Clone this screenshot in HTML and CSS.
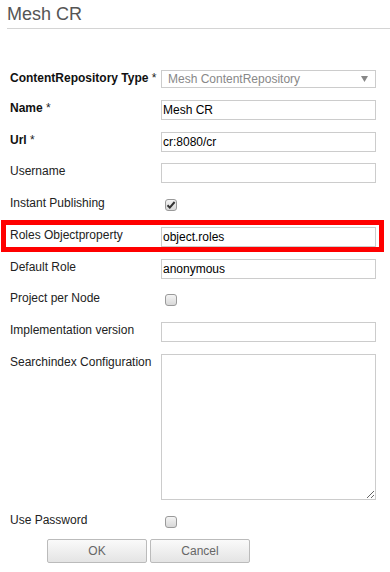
FILE: index.html
```html
<!DOCTYPE html>
<html lang="en">
<head>
    <meta charset="UTF-8">
    <title>Mesh CR</title>
    <link rel="stylesheet" href="styles.css">
</head>
<body>

<div class="header">
    <h1>Mesh CR</h1>
</div>

<form class="cr-form">
    <div class="fields">
        <div class="row">
            <label class="required"><b>ContentRepository Type</b> *</label>
            <div class="select disabled">
                <span>Mesh ContentRepository</span>
                <svg class="arrow" width="7" height="6" viewBox="0 0 7 6"><path d="M0 0h7L3.5 6z" fill="#888"/></svg>
            </div>
        </div>
        <div class="row">
            <label class="required"><b>Name</b> *</label>
            <input type="text" value="Mesh CR">
        </div>
        <div class="row">
            <label class="required"><b>Url</b> *</label>
            <input type="text" value="cr:8080/cr">
        </div>
        <div class="row">
            <label>Username</label>
            <input type="text" value="">
        </div>
        <div class="row">
            <label>Instant Publishing</label>
            <div class="check-cell">
                <span class="check">
                    <svg width="10" height="10" viewBox="0 0 10 10"><path d="M1.5 5.2l2.3 2.4L8.6 2" fill="none" stroke="#333" stroke-width="2"/></svg>
                </span>
            </div>
        </div>
        <div class="row highlight">
            <label>Roles Objectproperty</label>
            <input type="text" value="object.roles">
        </div>
        <div class="row">
            <label>Default Role</label>
            <input type="text" value="anonymous">
        </div>
        <div class="row">
            <label>Project per Node</label>
            <div class="check-cell"><span class="check"></span></div>
        </div>
        <div class="row">
            <label>Implementation version</label>
            <input type="text" value="">
        </div>
        <div class="row">
            <label>Searchindex Configuration</label>
            <textarea></textarea>
        </div>
        <div class="row">
            <label>Use Password</label>
            <div class="check-cell"><span class="check"></span></div>
        </div>
    </div>

    <div class="buttons">
        <button type="button">OK</button>
        <button type="button">Cancel</button>
    </div>
</form>

</body>
</html>
```

FILE: styles.css
```css
* {
    box-sizing: border-box;
}

body {
    margin: 0;
    font-family: 'Liberation Sans', Arial, sans-serif;
    font-size: 12px;
    color: #333;
    background: #fff;
}

.header {
    margin-left: 7px;
    padding: 4px 0 3px 0;
    border-bottom: 1px solid #d4d4d4;
}

h1 {
    margin: 0;
    font-size: 18px;
    font-weight: normal;
    line-height: 21px;
    color: #555;
}

.cr-form {
    padding: 41px 0 0 10px;
}

.fields {
    display: flex;
    flex-direction: column;
    gap: 11.75px;
}

.row {
    width: 366px;
    display: flex;
    align-items: flex-start;
}

.row label {
    width: 151px;
    flex: none;
    line-height: 16px;
    color: #222;
}

.row label b {
    color: #111;
}

input[type="text"],
textarea {
    width: 215px;
    height: 20px;
    margin: 0;
    padding: 0 1px;
    border: 1px solid #ccc;
    font-family: inherit;
    font-size: 12px;
    color: #000;
    background: #fff;
    outline: none;
}

textarea {
    height: 146px;
    padding: 2px;
}

.select {
    width: 215px;
    height: 18px;
    display: flex;
    align-items: center;
    justify-content: space-between;
    padding: 0 7px 0 6px;
    border: 1px solid #ccc;
    background: #fff;
}

.select.disabled {
    color: #888;
}

.check-cell {
    height: 20px;
    display: flex;
    align-items: center;
    padding-left: 4px;
}

.check {
    width: 12px;
    height: 12px;
    display: flex;
    align-items: center;
    justify-content: center;
    border: 1px solid #9a9a9a;
    border-radius: 3px;
    background: linear-gradient(#f4f4f4, #d8d8d8);
}

/* red marker drawn over the row */
.highlight {
    position: relative;
}

.highlight::after {
    content: "";
    position: absolute;
    top: -7px;
    bottom: -5px;
    left: -9px;
    right: -8px;
    border: 5px solid #f00;
    pointer-events: none;
}

.buttons {
    display: flex;
    gap: 3px;
    margin: 7px 0 0 37px;
}

.buttons button {
    width: 100px;
    height: 24px;
    padding: 0;
    border: 1px solid #bbb;
    border-radius: 2px;
    background: linear-gradient(#fafafa, #e4e4e4);
    font-family: inherit;
    font-size: 12px;
    color: #666;
}
```
